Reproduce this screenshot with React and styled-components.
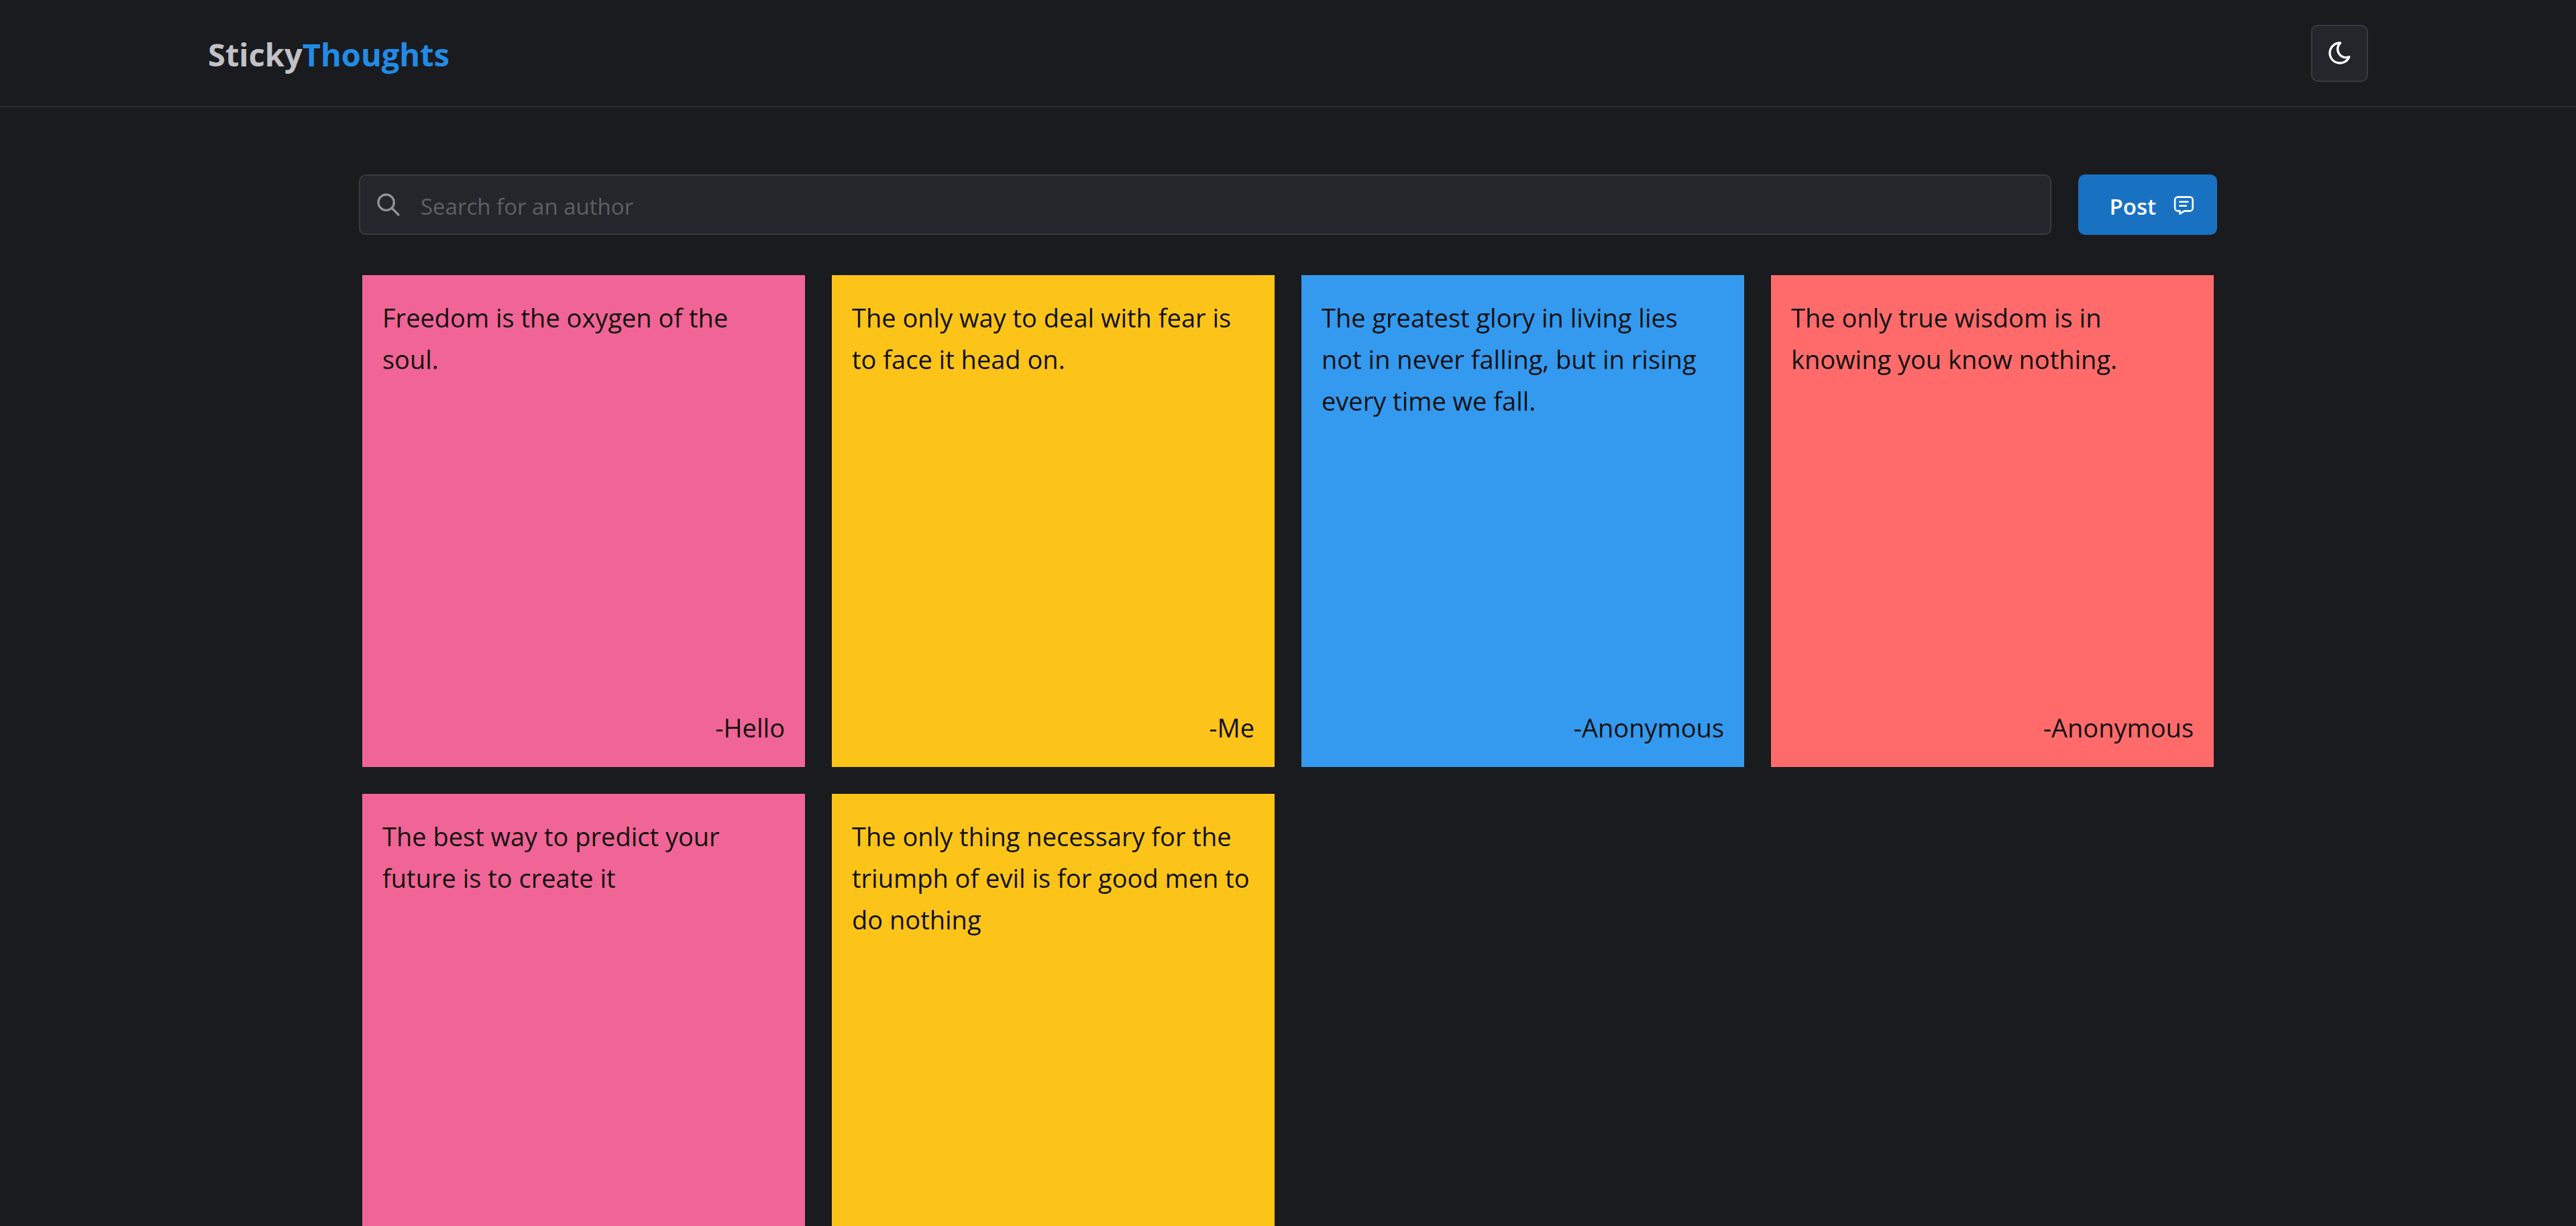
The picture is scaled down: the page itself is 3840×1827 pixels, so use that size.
import React from "react";
import styled, { createGlobalStyle } from "styled-components";

const Global = createGlobalStyle`
  *, *::before, *::after { box-sizing: border-box; }
  body {
    margin: 0;
    background: #1a1b1e;
    color: #c1c2c5;
    font-family: "Segoe UI", "Open Sans", "Noto Sans", sans-serif;
    font-size: 38px;
    line-height: 62px;
  }
`;

const Header = styled.header`
  padding: 0 40px;
  border-bottom: 2px solid #2c2e33;
`;

const HeaderInner = styled.div`
  display: flex;
  align-items: center;
  justify-content: space-between;
  width: 100%;
  max-width: 3220px;
  height: 158px;
  margin: 0 auto;
`;

const Logo = styled.a`
  padding-top: 4px;
  color: #c1c2c5;
  font-size: 47px;
  font-weight: 700;
  text-decoration: none;
`;

const LogoAccent = styled.span`
  color: #228be6;
`;

const ThemeButton = styled.button`
  display: grid;
  place-items: center;
  width: 85px;
  height: 85px;
  padding: 0;
  color: #fff;
  background: #25262b;
  border: 2px solid #373a40;
  border-radius: 10px;
  cursor: pointer;
`;

const Main = styled.main`
  width: 100%;
  max-width: 2850px;
  margin: 0 auto;
  padding: 100px 40px;
`;

const Toolbar = styled.div`
  display: flex;
  gap: 40px;
  margin-bottom: 60px;
`;

const SearchBox = styled.label`
  display: flex;
  flex: 1;
  align-items: center;
  gap: 28px;
  height: 90px;
  padding: 0 22px;
  color: #909296;
  background: #25262b;
  border: 2px solid #373a40;
  border-radius: 10px;
`;

const SearchInput = styled.input`
  flex: 1;
  min-width: 0;
  height: 100%;
  padding: 4px 0 0;
  color: #c1c2c5;
  font-family: inherit;
  font-size: 33px;
  background: none;
  border: 0;
  outline: 0;

  &::placeholder {
    color: #5c5f66;
    opacity: 1;
  }
`;

const PostButton = styled.button`
  display: flex;
  align-items: center;
  gap: 26px;
  height: 90px;
  padding: 0 35px 0 46px;
  color: #fff;
  font-family: inherit;
  font-size: 33px;
  font-weight: 600;
  background: #1971c2;
  border: 0;
  border-radius: 10px;
  cursor: pointer;
`;

const PostLabel = styled.span`
  padding-top: 4px;
`;

const Icon = styled.svg`
  display: block;
  flex: none;
  width: ${(p) => p.$size}px;
  height: ${(p) => p.$size}px;
  fill: none;
  stroke: currentColor;
  stroke-width: ${(p) => p.$stroke || 2};
  stroke-linecap: round;
  stroke-linejoin: round;
`;

const Board = styled.section`
  display: grid;
  grid-template-columns: repeat(4, minmax(0, 1fr));
  gap: 40px;
  padding: 0 5px;
`;

const Note = styled.article`
  display: flex;
  flex-direction: column;
  justify-content: space-between;
  min-height: 733px;
  padding: 32px 30px 28px;
  color: #111;
  background: ${(p) => p.$color};
`;

const Message = styled.p`
  margin: 0;
`;

const Author = styled.p`
  margin: 0;
  text-align: right;
`;

const PINK = "#f06595";
const YELLOW = "#fcc419";
const BLUE = "#339af0";
const RED = "#ff6b6b";

const thoughts = [
  { text: "Freedom is the oxygen of the soul.", author: "Hello", color: PINK },
  { text: "The only way to deal with fear is to face it head on.", author: "Me", color: YELLOW },
  {
    text: "The greatest glory in living lies not in never falling, but in rising every time we fall.",
    author: "Anonymous",
    color: BLUE,
  },
  { text: "The only true wisdom is in knowing you know nothing.", author: "Anonymous", color: RED },
  { text: "The best way to predict your future is to create it", color: PINK },
  {
    text: "The only thing necessary for the triumph of evil is for good men to do nothing",
    color: YELLOW,
  },
];

const MoonIcon = () => (
  <Icon $size={40} viewBox="0 0 24 24" aria-hidden="true">
    <path d="M12 3c.132 0 .263 0 .393 0a7.5 7.5 0 0 0 7.92 12.446a9 9 0 1 1 -8.313 -12.454z" />
  </Icon>
);

const SearchIcon = () => (
  <Icon $size={40} viewBox="0 0 24 24" aria-hidden="true">
    <circle cx="10" cy="10" r="7" />
    <path d="M21 21l-6 -6" />
  </Icon>
);

const MessageIcon = () => (
  <Icon $size={30} $stroke={2.6} viewBox="0 0 30 30" aria-hidden="true">
    <path d="M6.5 3.6h17.8a4.4 4.4 0 0 1 4.4 4.4v12a4.4 4.4 0 0 1 -4.4 4.4h-8l-6.8 4.2v-4.2h-3a4.4 4.4 0 0 1 -4.4 -4.4v-12a4.4 4.4 0 0 1 4.4 -4.4z" />
    <path d="M9.4 10.7h12M9.4 16.7h9.4" />
  </Icon>
);

export default function App() {
  return (
    <>
      <Global />
      <Header>
        <HeaderInner>
          <Logo href="#">
            Sticky<LogoAccent>Thoughts</LogoAccent>
          </Logo>
          <ThemeButton type="button" aria-label="Toggle color scheme">
            <MoonIcon />
          </ThemeButton>
        </HeaderInner>
      </Header>
      <Main>
        <Toolbar>
          <SearchBox>
            <SearchIcon />
            <SearchInput type="text" placeholder="Search for an author" aria-label="Search for an author" />
          </SearchBox>
          <PostButton type="button">
            <PostLabel>Post</PostLabel>
            <MessageIcon />
          </PostButton>
        </Toolbar>
        <Board>
          {thoughts.map((t) => (
            <Note key={t.text} $color={t.color}>
              <Message>{t.text}</Message>
              {t.author && <Author>-{t.author}</Author>}
            </Note>
          ))}
        </Board>
      </Main>
    </>
  );
}
